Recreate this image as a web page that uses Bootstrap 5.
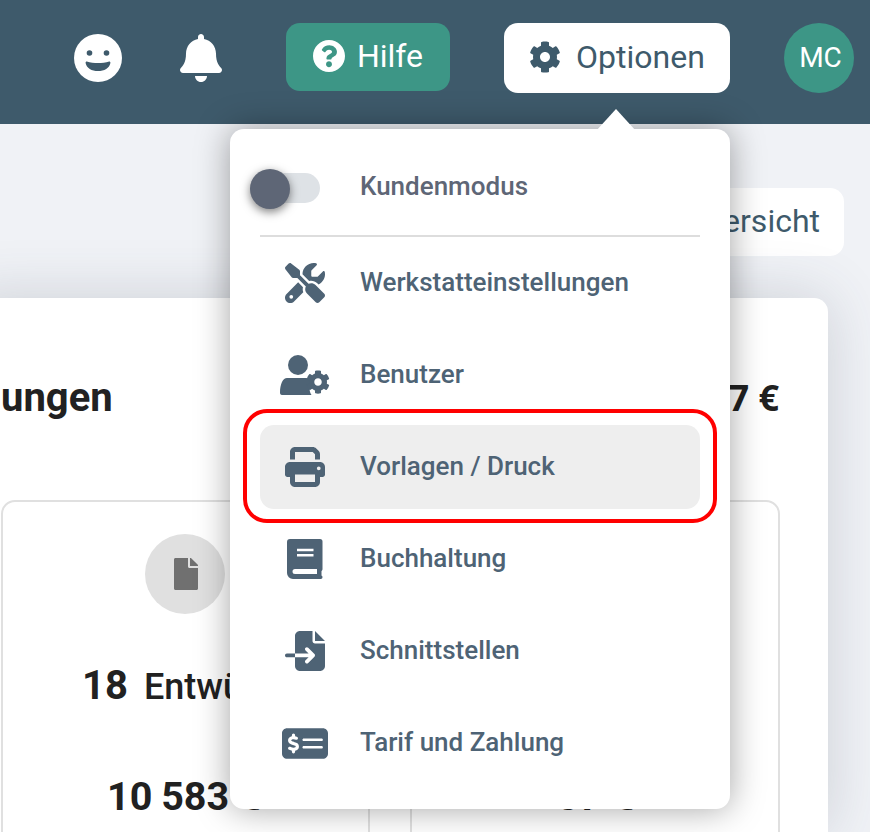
<!doctype html>
<html lang="de"><head><meta charset="utf-8"><title>Optionen</title>
<link rel="stylesheet" href="https://cdn.jsdelivr.net/npm/bootstrap@5.3.0/dist/css/bootstrap.min.css">
<style>
html,body{height:832px;overflow:hidden}
body{background:#f0f2f6;font-family:Roboto,"Liberation Sans",sans-serif;position:relative}
.topbar{height:124px;background:#3e5a6b;padding:23px 16px 0 0}
.tb-icon{color:#fff;display:flex;margin-top:11px}
.tb-smile{margin-right:58px}
.btn-hilfe{height:68px;width:164px;margin-left:64px;background:#3d9686;color:#fff;border-radius:14px;font-size:32px;gap:12px;padding:0 0 2px}
.btn-opt{height:70px;width:226px;margin-left:54px;background:#fff;color:#3e5a6b;border-radius:14px;font-size:32px;gap:15px;padding:0 0 2px}
.avatar{width:70px;height:70px;margin-left:54px;background:#3d9686;color:#fff;border-radius:50%;font-size:28px;padding-left:3px}
.page{position:relative;height:708px}
.ov-btn{position:absolute;right:26px;top:64px;height:68px;width:220px;background:#fff;border-radius:14px;color:#3e5a6b;font-size:32px;padding:0 24px 3px 0}
.main-card{position:absolute;left:-40px;top:174px;width:868px;height:534px;background:#fff;border-radius:14px 14px 0 0;box-shadow:0 0 60px rgba(60,70,90,.2);overflow:hidden}
.hd{position:absolute;top:78px;font-size:36px;font-weight:700;color:#212121;line-height:44px}
.hd-l{left:41px;font-size:40px}
.hd-r{right:49px;font-family:"Open Sans",Roboto,sans-serif}
.stat{position:absolute;top:202px;height:500px;border:2px solid #e0e0e0;border-radius:14px}
.stat-a{left:41px;width:369px}
.stat-b{left:450px;width:370px}
.doc-circ{position:absolute;left:142px;top:32px;width:80px;height:80px;border-radius:50%;background:#e0e0e0;padding-left:2px}
.st-t{position:absolute;left:79px;top:162px;font-size:36px;font-weight:500;color:#212121;white-space:nowrap;line-height:44px}
.st-t b{font-size:40px;font-weight:700;margin-right:16px}
.st-v{position:absolute;left:104px;top:273px;font-size:39.500px;font-weight:700;color:#212121;white-space:nowrap;line-height:44px;word-spacing:-1px}
.st-v2{left:145px}
.menu{position:absolute;left:230px;top:5px;width:500px;height:680px;background:#fff;border-radius:14px;box-shadow:0 0 34px rgba(0,0,0,.36);padding:12px 30px 0;z-index:5}
.caret-up{position:absolute;left:596px;top:-15px;width:40px;height:22px;background:#fff;clip-path:polygon(50% 0,100% 100%,0 100%);z-index:6}
.mi{height:84px;margin-bottom:8px;padding-left:100px;padding-bottom:2px;border-radius:14px;font-size:26px;font-weight:500;color:#4e6375;position:relative;text-decoration:none}
.mi.hov{background:#eee}
.mi-ic{position:absolute;left:0;width:90px;top:0;bottom:0;display:flex;align-items:center;justify-content:center}
.mi-ic svg{fill:#4e6375}
.k-row{height:96px;padding:0 0 4px 100px;font-size:26px;font-weight:500;color:#5e6676;position:relative;border-bottom:2px solid #ddd;margin-bottom:4px}
.sw-track{position:absolute;left:-10px;top:32px;width:70px;height:30px;background:#dee2e6;border-radius:15px}
.sw-knob{position:absolute;left:-10px;top:28px;width:40px;height:40px;background:#5e6676;border-radius:50%;box-shadow:0 3px 10px rgba(0,0,0,.5)}
.redbox{position:absolute;left:243px;top:285px;width:474px;height:114px;border:4px solid #f00;border-radius:24px;z-index:7}
</style></head><body>
<svg width="0" height="0" class="position-absolute"><defs>
<symbol id="ic-cog" viewBox="0 0 512 512"><path d="M487.4 315.700l-42.600-24.600c4.300-23.200 4.300-47 0-70.200l42.600-24.600c4.900-2.800 7.100-8.600 5.500-14-11.100-35.600-30-67.800-54.700-94.600-3.800-4.100-10-5.100-14.800-2.300L380.800 110c-17.900-15.400-38.500-27.300-60.800-35.100V25.800c0-5.600-3.900-10.500-9.400-11.700-36.700-8.200-74.300-7.800-109.200 0-5.500 1.200-9.400 6.100-9.400 11.700V75c-22.200 7.900-42.800 19.800-60.800 35.100L88.700 85.500c-4.900-2.800-11-1.900-14.800 2.300-24.700 26.700-43.600 58.900-54.700 94.600-1.700 5.400.6 11.200 5.500 14L67.300 221c-4.300 23.200-4.300 47 0 70.200l-42.600 24.600c-4.900 2.800-7.100 8.600-5.500 14 11.100 35.600 30 67.800 54.700 94.600 3.800 4.100 10 5.100 14.800 2.300l42.600-24.600c17.900 15.400 38.500 27.300 60.800 35.100v49.200c0 5.600 3.900 10.500 9.400 11.700 36.700 8.200 74.300 7.800 109.200 0 5.500-1.200 9.400-6.100 9.400-11.700v-49.200c22.200-7.900 42.800-19.800 60.800-35.100l42.600 24.600c4.900 2.800 11 1.900 14.800-2.300 24.700-26.700 43.600-58.900 54.700-94.600 1.500-5.500-.7-11.300-5.600-14.100zM256 336c-44.100 0-80-35.900-80-80s35.900-80 80-80 80 35.900 80 80-35.900 80-80 80z"/></symbol>
</defs></svg>
<header class="topbar d-flex align-items-start justify-content-end">
 <span class="tb-icon tb-smile"><svg width="48" height="48" viewBox="0 0 48 48"><circle cx="24" cy="24" r="24" fill="#fff"/><circle cx="15.500" cy="19" r="2.800" fill="#3e5a6b"/><circle cx="32.500" cy="19" r="2.800" fill="#3e5a6b"/><path d="M12.800 27.500c-.8 0-1.300.6-1.200 1.400C12.500 34 17.700 37 24 37s11.500-3 12.400-8.100c.1-.8-.4-1.400-1.200-1.400-3.500 1.100-7.300 1.600-11.200 1.600s-7.700-.5-11.200-1.600z" fill="#3e5a6b"/></svg></span>
 <span class="tb-icon"><svg width="42" height="48" viewBox="0 0 448 512" fill="#fff"><path d="M224 512c35.320 0 63.970-28.650 63.970-64H160.030c0 35.350 28.650 64 63.970 64zm215.390-149.710c-19.320-20.760-55.470-51.990-55.470-154.290 0-77.700-54.480-139.900-127.940-155.160V32c0-17.670-14.320-32-31.980-32s-31.980 14.330-31.980 32v20.840C118.560 68.100 64.080 130.300 64.080 208c0 102.300-36.150 133.530-55.470 154.290-6 6.450-8.660 14.160-8.610 21.710.11 16.400 12.980 32 32.100 32h383.800c19.120 0 32-15.600 32.100-32 .05-7.550-2.610-15.270-8.610-21.710z"/></svg></span>
 <a class="btn btn-hilfe d-flex align-items-center justify-content-center" href="#"><svg width="32" height="32" viewBox="8 8 496 496" fill="#fff"><path d="M504 256c0 136.997-111.043 248-248 248S8 392.997 8 256C8 119.083 119.043 8 256 8s248 111.083 248 248zM262.655 90c-54.497 0-89.255 22.957-116.549 63.758-3.536 5.286-2.353 12.415 2.715 16.258l34.699 26.310c5.205 3.947 12.621 3.008 16.665-2.122 17.864-22.658 30.113-35.797 57.303-35.797 20.429 0 45.698 13.148 45.698 32.958 0 14.976-12.363 22.667-32.534 33.976C247.128 238.528 216 254.941 216 296v4c0 6.627 5.373 12 12 12h56c6.627 0 12-5.373 12-12v-1.333c0-28.462 83.186-29.647 83.186-106.667 0-58.002-60.165-102-116.531-102zM256 338c-25.365 0-46 20.635-46 46 0 25.364 20.635 46 46 46s46-20.636 46-46c0-25.365-20.635-46-46-46z"/></svg>Hilfe</a>
 <a class="btn btn-opt d-flex align-items-center justify-content-center" href="#"><svg width="32" height="32" fill="#3e5a6b"><use href="#ic-cog"/></svg>Optionen</a>
 <span class="avatar d-flex align-items-center justify-content-center">MC</span>
</header>
<div class="page">
 <div class="ov-btn d-flex align-items-center justify-content-end">Übersicht</div>
 <div class="main-card">
  <div class="hd hd-l">ungen</div>
  <div class="hd hd-r">7 €</div>
  <div class="stat stat-a">
   <div class="doc-circ d-flex align-items-center justify-content-center"><svg width="24" height="32" viewBox="0 0 384 512" fill="#707070"><path d="M224 136V0H24C10.700 0 0 10.700 0 24v464c0 13.300 10.700 24 24 24h336c13.300 0 24-10.700 24-24V160H248c-13.200 0-24-10.800-24-24zm160-14.100v6.100H256V0h6.100c6.400 0 12.500 2.500 17 7l97.900 98c4.500 4.500 7 10.600 7 16.900z"/></svg></div>
   <div class="st-t"><b>18</b>Entwürfe</div>
   <div class="st-v">10 583 €</div>
  </div>
  <div class="stat stat-b"><div class="st-v st-v2">37 €</div></div>
 </div>
 <div class="caret-up"></div>
 <nav class="menu">
  <div class="k-row d-flex align-items-center"><span class="sw-track"></span><span class="sw-knob"></span>Kundenmodus</div>
  <a class="mi d-flex align-items-center" href="#"><span class="mi-ic"><svg width="40" height="40" viewBox="0 0 512 512"><path d="M78.600 5C69.100-2.400 55.600-1.500 47 7L7 47c-8.500 8.500-9.400 22-2.100 31.600l80 104c4.500 5.900 11.600 9.400 19 9.400h54.100l109 109c-14.700 29-10 65.400 14.300 89.600l112 112c12.500 12.500 32.800 12.500 45.300 0l64-64c12.500-12.500 12.500-32.800 0-45.300l-112-112c-24.200-24.200-60.600-29-89.600-14.300l-109-109V104c0-7.500-3.500-14.500-9.400-19L78.600 5zM19.900 396.100C7.200 408.800 0 426.100 0 444.100C0 481.600 30.400 512 67.900 512c18 0 35.300-7.200 48-19.900L233.700 374.300c-7.800-20.900-9-43.600-3.600-65.100l-61.700-61.700L19.900 396.100zM512 144c0-10.500-1.100-20.700-3.200-30.500c-2.400-11.200-16.100-14.100-24.200-6l-63.900 63.900c-3 3-7.100 4.700-11.300 4.700H352c-8.800 0-16-7.200-16-16V102.600c0-4.200 1.700-8.300 4.700-11.300l63.900-63.900c8.100-8.100 5.200-21.800-6-24.200C388.700 1.100 378.500 0 368 0C288.500 0 224 64.500 224 144l0 .8 85.300 85.300c36-9.100 75.800 .5 104 28.700L429 274.500c49-23 83-72.800 83-130.500zM56 432a24 24 0 1 1 48 0 24 24 0 1 1 -48 0z"/></svg></span>Werkstatteinstellungen</a>
  <a class="mi d-flex align-items-center" href="#"><span class="mi-ic"><svg width="50" height="40" viewBox="0 0 50 40"><circle cx="18" cy="10" r="10"/><path d="M7 23h17c3 0 6 .5 8 1.500-3 4-3.500 11-.5 15.500H2c-1.500 0-2-1-2-2.500C0 29 3 23 7 23z"/><svg x="26" y="15" width="24" height="24" viewBox="0 0 512 512"><use href="#ic-cog"/></svg></svg></span>Benutzer</a>
  <a class="mi hov d-flex align-items-center" href="#"><span class="mi-ic"><svg width="40" height="40" viewBox="0 0 512 512"><path d="M128 0C92.700 0 64 28.700 64 64v96h64V64H354.700L384 93.300V160h64V93.300c0-17-6.700-33.300-18.700-45.300L400 18.700C388 6.700 371.700 0 354.700 0H128zM384 352v32 64H128V384 368 352H384zm64 32h32c17.700 0 32-14.300 32-32V256c0-35.300-28.700-64-64-64H64c-35.300 0-64 28.700-64 64v96c0 17.700 14.300 32 32 32H64v64c0 35.300 28.700 64 64 64H384c35.300 0 64-28.700 64-64V384zM432 248a24 24 0 1 1 0 48 24 24 0 1 1 0-48z"/></svg></span>Vorlagen / Druck</a>
  <a class="mi d-flex align-items-center" href="#"><span class="mi-ic"><svg width="36" height="40" viewBox="0 0 36 40"><path fill-rule="evenodd" d="M3 0H33a2.500 2.500 0 0 1 2.500 2.500V30c0 1-.5 1.600-1 2v4.500c.8.500 1 1 1 1.500 0 1.200-.6 2-1.800 2H6a6 6 0 0 1-6-6V3a3 3 0 0 1 3-3zM10 9.700v2.600h16.500V9.700zM10 15v2.600h16.500V15zM8 30a2.500 2.500 0 0 0 0 5H30v-5z"/></svg></span>Buchhaltung</a>
  <a class="mi d-flex align-items-center" href="#"><span class="mi-ic"><svg width="40" height="40" viewBox="0 0 512 512"><path d="M128 64c0-35.300 28.700-64 64-64H352V128c0 17.700 14.300 32 32 32H512V448c0 35.300-28.700 64-64 64H192c-35.300 0-64-28.700-64-64V336H302.100l-39 39c-9.400 9.400-9.400 24.600 0 33.900s24.600 9.400 33.900 0l80-80c9.400-9.400 9.400-24.600 0-33.900l-80-80c-9.400-9.400-24.600-9.400-33.900 0s-9.400 24.600 0 33.900l39 39H128V64zm0 224v48H24c-13.300 0-24-10.700-24-24s10.700-24 24-24H128zM512 128H384V0L512 128z"/></svg></span>Schnittstellen</a>
  <a class="mi d-flex align-items-center" href="#"><span class="mi-ic"><svg width="46" height="41" viewBox="0 0 576 512"><path d="M64 64C28.700 64 0 92.700 0 128V384c0 35.300 28.700 64 64 64H512c35.300 0 64-28.700 64-64V128c0-35.300-28.700-64-64-64H64zM272 192H496c8.800 0 16 7.200 16 16s-7.200 16-16 16H272c-8.800 0-16-7.200-16-16s7.200-16 16-16zM256 304c0-8.800 7.200-16 16-16H496c8.800 0 16 7.200 16 16s-7.200 16-16 16H272c-8.800 0-16-7.200-16-16zM164 152v13.900c7.500 1.200 14.600 2.900 21.100 4.700c10.700 2.800 17 13.800 14.200 24.500s-13.800 17-24.500 14.200c-11-2.900-21.600-5-31.200-5.200c-7.900-.1-16 1.800-21.500 5c-4.800 2.800-6.200 5.600-6.200 9.300c0 1.800 .1 3.500 5.300 6.700c6.300 3.800 15.500 6.700 28.300 10.500l.7 .2c11.200 3.400 25.600 7.700 37.100 15c12.900 8.100 24.300 21.300 24.600 41.600c.3 20.900-10.500 36.100-24.800 45c-7.200 4.500-15.200 7.300-23.200 9V360c0 11-9 20-20 20s-20-9-20-20V345.400c-10.300-2.200-20-5.500-28.200-8.400c-2.100-.7-4.100-1.400-6.100-2.100c-10.500-3.500-16.100-14.800-12.600-25.300s14.800-16.100 25.300-12.600c2.500 .8 4.900 1.700 7.200 2.400c13.600 4.600 24 8.100 35.100 8.500c8.600 .3 16.500-1.600 21.400-4.700c4.100-2.500 6-5.500 5.900-10.500c0-2.900-.8-5-5.900-8.200c-6.300-4-15.400-6.900-28-10.700l-1.700-.5c-10.900-3.300-24.600-7.400-35.600-14c-12.700-7.700-24.600-20.500-24.700-40.700c-.1-21.100 11.800-35.700 25.800-43.900c6.900-4.100 14.500-6.800 22.200-8.500V152c0-11 9-20 20-20s20 9 20 20z"/></svg></span>Tarif und Zahlung</a>
 </nav>
 <div class="redbox"></div>
</div>
</body></html>
